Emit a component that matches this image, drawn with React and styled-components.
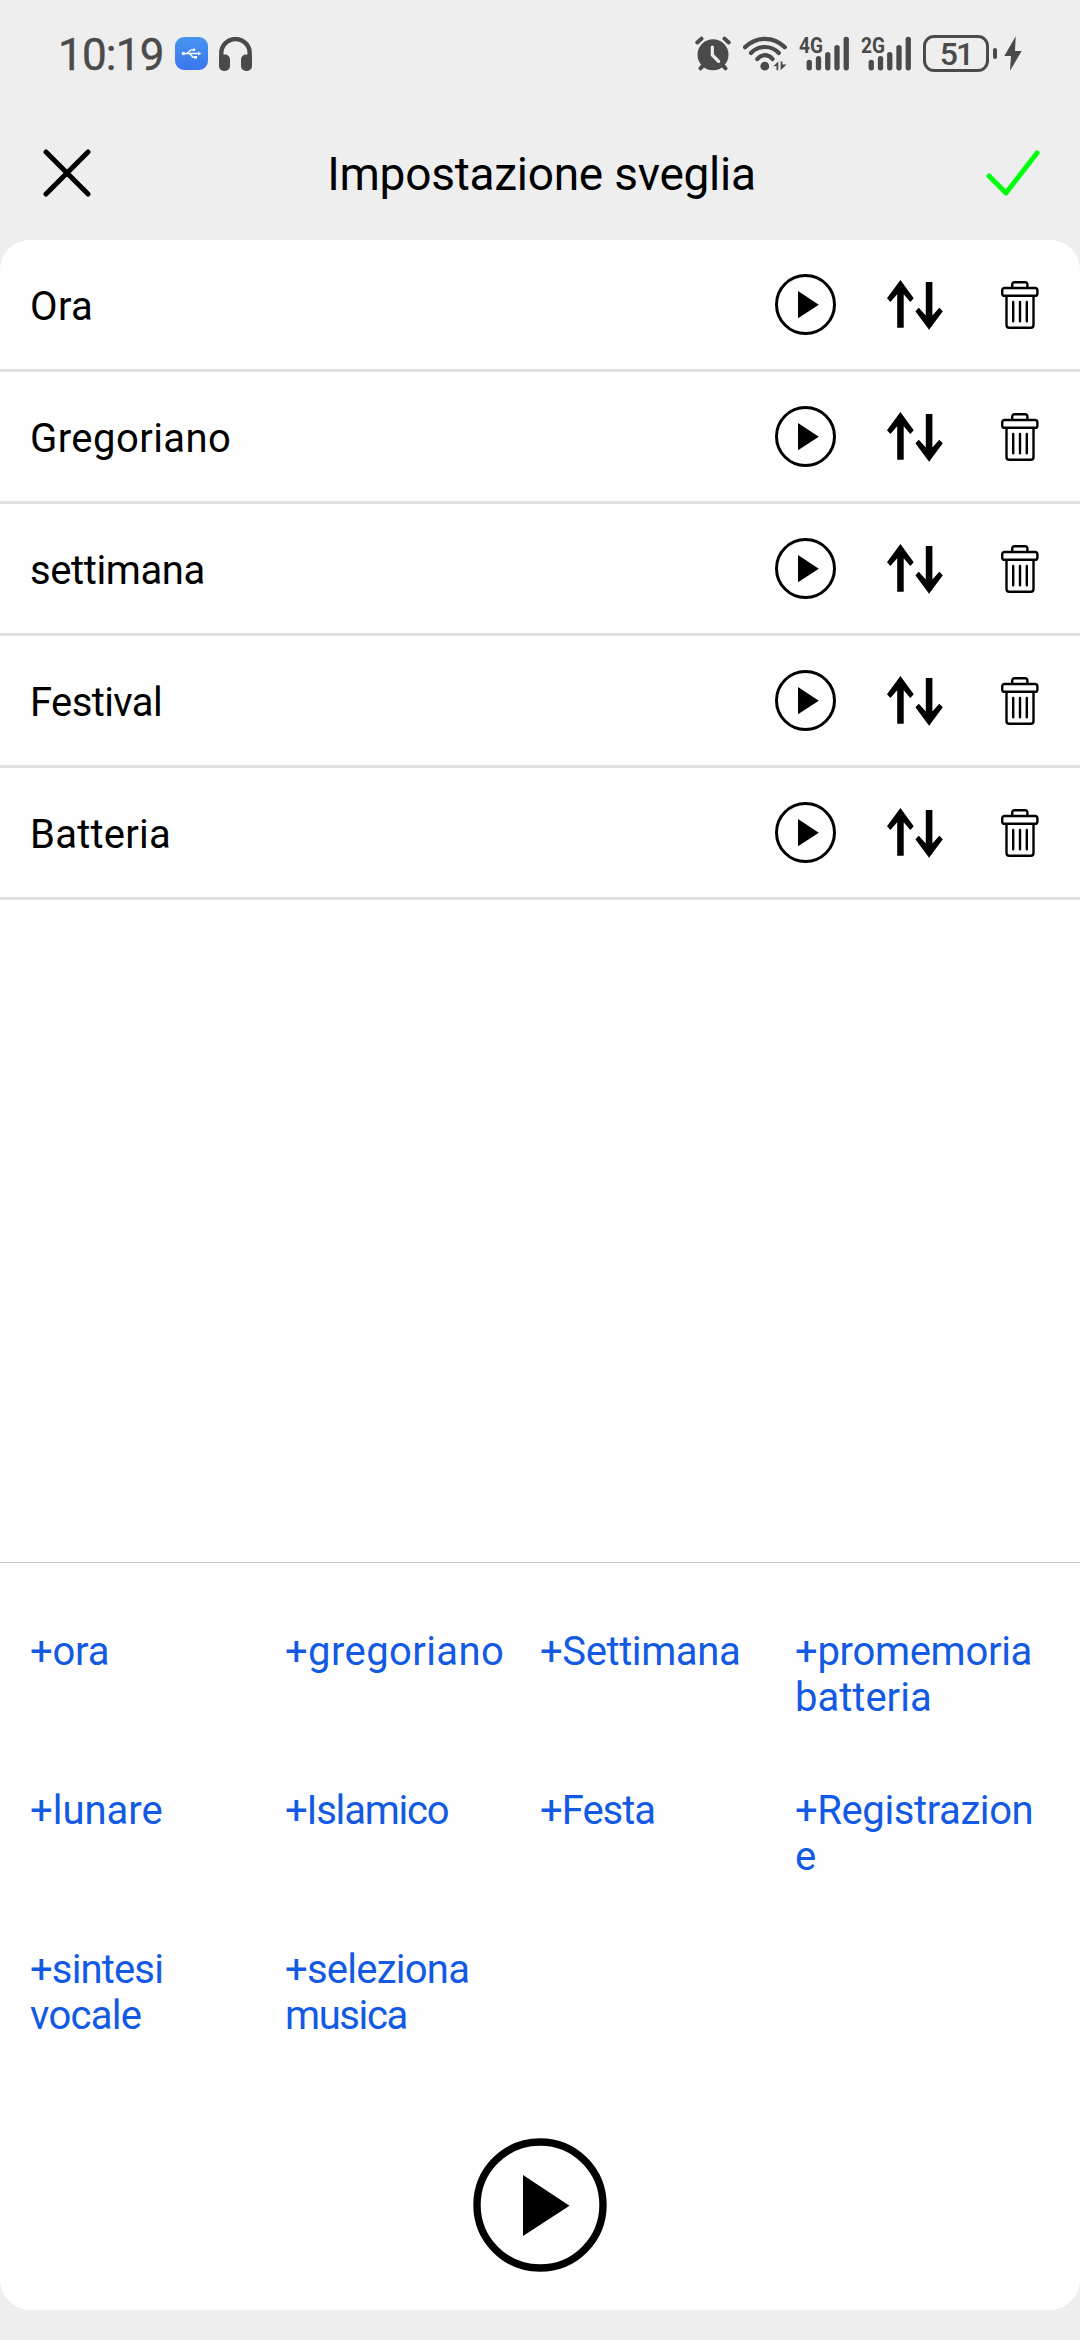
/** @format */

import React from 'react'
import styled, { createGlobalStyle } from 'styled-components'

const items = [
  { label: 'Ora', spacing: 0.4 },
  { label: 'Gregoriano', spacing: 0.45 },
  { label: 'settimana', spacing: -0.4 },
  { label: 'Festival', spacing: -0.6 },
  { label: 'Batteria', spacing: 0.25 },
]

// each line carries its own letter spacing
const actions = [
  [['+ora', -0.2]],
  [['+gregoriano', 0.4]],
  [['+Settimana', -0.4]],
  [['+promemoria', -0.3], ['batteria', 0]],
  [['+lunare', 0]],
  [['+Islamico', -1.2]],
  [['+Festa', -1]],
  [['+Registrazion', -0.4], ['e', 0]],
  [['+sintesi', -0.85], ['vocale', -0.7]],
  [['+seleziona', -0.75], ['musica', -1.4]],
]

const barTops = [23.7, 20, 16, 9, 0.7]

function UsbIcon() {
  return (
    <svg width='33' height='33' viewBox='0 0 33 33'>
      <g fill='none' stroke='white' strokeWidth='1.3'>
        <path d='M8 16.5H23M12 16.5L16 12.8H18.5M14.5 16.5L18 20.3H20' />
      </g>
      <circle cx='8.5' cy='16.5' r='1.8' fill='white' />
      <circle cx='19' cy='12.8' r='1.4' fill='white' />
      <rect x='19' y='19' width='3' height='2.6' fill='white' />
      <path d='M23 14.6L26.3 16.5L23 18.4Z' fill='white' />
    </svg>
  )
}

function HeadphonesIcon() {
  return (
    <svg width='33' height='34' viewBox='0 0 33 34'>
      <path d='M2.3 25V16.2A14.2 14.2 0 0 1 30.7 16.2V25' fill='none' stroke='#4a4a4a' strokeWidth='4.4' />
      <rect x='0' y='17.5' width='11' height='16.5' rx='5' fill='#4a4a4a' />
      <rect x='22' y='17.5' width='11' height='16.5' rx='5' fill='#4a4a4a' />
    </svg>
  )
}

function AlarmIcon() {
  return (
    <svg width='36' height='35' viewBox='0 0 36 35'>
      <g stroke='#4a4a4a' strokeWidth='4' strokeLinecap='round'>
        <path d='M2.3 6.5L6.5 2.6M33.7 6.5L29.5 2.6' />
        <path d='M5.5 32.3L9 28.5M30.5 32.3L27 28.5' />
      </g>
      <circle cx='18' cy='18.7' r='15.5' fill='#4a4a4a' />
      <path
        d='M17.3 11V19L23.6 25.3'
        fill='none'
        stroke='#eee'
        strokeWidth='3.2'
        strokeLinecap='round'
        strokeLinejoin='round'
      />
    </svg>
  )
}

function WifiIcon() {
  return (
    <svg width='44' height='35' viewBox='0 0 44 35'>
      <g fill='none' stroke='#4a4a4a' strokeWidth='4.2' strokeLinecap='round'>
        <path d='M2 11.3Q10.5 2.8 21.9 2.8T41.8 11.3' />
        <path d='M8 17Q13.7 11 21.9 11T35.8 17' />
        <path d='M14.3 23Q17.4 19.2 21.9 19.2T29.5 23' />
      </g>
      <circle cx='21.8' cy='30.2' r='4.4' fill='#4a4a4a' />
      <path d='M30.3 30.2L35.3 25.6V34.3H33.5V30.2ZM37.6 34.3V25.6H39.4V28.4H43.6Z' fill='#4a4a4a' />
    </svg>
  )
}

function Signal({ label }) {
  return (
    <svg width='50' height='45' viewBox='0 -5 50 45'>
      <NetLabel x='0' y='17' textLength='24' lengthAdjust='spacingAndGlyphs'>
        {label}
      </NetLabel>
      {barTops.map((top, i) => (
        <rect key={top} x={7.6 + i * 9.25} y={top} width='5.3' height={34.4 - top} rx='2.6' fill='#4a4a4a' />
      ))}
    </svg>
  )
}

function BoltIcon() {
  return (
    <svg width='18' height='35' viewBox='0 0 18 35'>
      <path d='M11.7 0.3L0.3 20H7L6 34.7L17.7 15H11Z' fill='#4a4a4a' />
    </svg>
  )
}

function CloseIcon() {
  return (
    <svg width='48' height='48' viewBox='0 0 48 48'>
      <path d='M3 3L45 45M45 3L3 45' stroke='black' strokeWidth='5' strokeLinecap='round' />
    </svg>
  )
}

function CheckIcon() {
  return (
    <svg width='54' height='48' viewBox='0 0 54 48'>
      <path
        d='M3 27L20 44L51 4'
        fill='none'
        stroke='#00ff0c'
        strokeWidth='5'
        strokeLinecap='round'
        strokeLinejoin='round'
      />
    </svg>
  )
}

function PlayIcon() {
  return (
    <svg width='61' height='61' viewBox='0 0 61 61'>
      <circle cx='30.5' cy='30.5' r='29' fill='none' stroke='black' strokeWidth='3' />
      <path d='M23 17V44.3L43.8 30.7Z' />
    </svg>
  )
}

function BigPlayIcon() {
  return (
    <svg width='134' height='134' viewBox='0 0 134 134'>
      <circle cx='67' cy='67' r='63' fill='none' stroke='black' strokeWidth='7.4' />
      <path d='M50 37V98L96.5 67.7Z' />
    </svg>
  )
}

function SortIcon() {
  return (
    <svg width='56' height='50' viewBox='0 0 56 50'>
      <path d='M13.4 0L26.7 18.3L23.3 22L16.7 14.3V47.7H10.2V14.3L3.4 22L0 18.3Z' />
      <path d='M38.8 2H45.4V35.6L52.3 27.7L55.8 31.3L42.1 49.8L28.4 31.3L31.8 27.7L38.8 35.6Z' />
    </svg>
  )
}

function TrashIcon() {
  return (
    <svg width='38' height='48' viewBox='0 0 38 48'>
      <g fill='none' stroke='black' strokeWidth='2.4'>
        <path d='M11.2 6.8V3.6Q11.2 1.2 13.6 1.2H24Q26.4 1.2 26.4 3.6V6.8' />
        <rect x='1.2' y='7' width='35.2' height='7.8' rx='2.4' />
        <path d='M5.5 15V44Q5.5 46.8 8.3 46.8H29.7Q32.5 46.8 32.5 44V15' />
        <path d='M12.2 21V40.2M19 21V40.2M25.8 21V40.2' strokeLinecap='round' />
      </g>
    </svg>
  )
}

function App() {
  return (
    <Screen>
      <GlobalStyle />
      <StatusBar>
        <StatusLeft>
          <Clock>10:19</Clock>
          <UsbBadge>
            <UsbIcon />
          </UsbBadge>
          <HeadphonesIcon />
        </StatusLeft>
        <StatusRight>
          <AlarmIcon />
          <WifiIcon />
          <Signal label='4G' />
          <Signal label='2G' />
          <Battery>
            <BatteryBody>51</BatteryBody>
            <BatteryTip />
          </Battery>
          <BoltIcon />
        </StatusRight>
      </StatusBar>
      <Header>
        <IconButton>
          <CloseIcon />
        </IconButton>
        <Title>Impostazione sveglia</Title>
        <IconButton>
          <CheckIcon />
        </IconButton>
      </Header>
      <Card>
        <List>
          {items.map((item) => (
            <Row key={item.label}>
              <RowLabel $spacing={item.spacing}>{item.label}</RowLabel>
              <RowTools>
                <IconButton>
                  <PlayIcon />
                </IconButton>
                <IconButton>
                  <SortIcon />
                </IconButton>
                <IconButton>
                  <TrashIcon />
                </IconButton>
              </RowTools>
            </Row>
          ))}
        </List>
        <Panel>
          <ActionGrid>
            {actions.map((lines) => (
              <Action key={lines[0][0]}>
                {lines.map(([text, spacing]) => (
                  <ActionLine key={text} $spacing={spacing}>
                    {text}
                  </ActionLine>
                ))}
              </Action>
            ))}
          </ActionGrid>
          <PlayAll>
            <BigPlayIcon />
          </PlayAll>
        </Panel>
      </Card>
    </Screen>
  )
}

export default App

const GlobalStyle = createGlobalStyle`
  * {
    box-sizing: border-box;
  }
  body {
    margin: 0;
    background-color: #eeeeee;
    font-family: Roboto, 'Noto Sans', sans-serif;
  }
  svg {
    display: block;
    flex-shrink: 0;
  }
`

const Screen = styled.div`
  width: 1080px;
  height: 2340px;
  display: flex;
  flex-direction: column;
  padding-bottom: 30px;
  background-color: #eeeeee;
`

const StatusBar = styled.div`
  height: 107px;
  display: flex;
  justify-content: space-between;
  align-items: center;
  padding: 0 58px 0 57px;
  color: #4a4a4a;
`

const StatusLeft = styled.div`
  display: flex;
  align-items: center;
  gap: 11px;
`

const StatusRight = styled.div`
  display: flex;
  align-items: center;
  gap: 12px;
`

const Clock = styled.span`
  width: 107px;
  padding-top: 2px;
  padding-left: 1px;
  font-size: 44px;
  line-height: 52px;
  letter-spacing: -0.8px;
  -webkit-text-stroke: 0.4px #4a4a4a;
`

const UsbBadge = styled.span`
  width: 33px;
  height: 33px;
  border-radius: 9px;
  background: linear-gradient(#4694f1, #3a76ec);
`

const NetLabel = styled.text`
  font-size: 22px;
  font-weight: 700;
  fill: #4a4a4a;
`

const Battery = styled.div`
  display: flex;
  align-items: center;
  gap: 4px;
  margin-right: -5px;
`

const BatteryBody = styled.div`
  width: 66px;
  height: 37px;
  border: 3px solid #4a4a4a;
  border-radius: 11px;
  font-size: 32px;
  font-weight: 500;
  line-height: 32px;
  text-align: center;
  letter-spacing: -2px;
`

const BatteryTip = styled.div`
  width: 4px;
  height: 11px;
  border-radius: 2px;
  background-color: #4a4a4a;
`

const Header = styled.div`
  height: 133px;
  display: grid;
  grid-template-columns: 54px 1fr 54px;
  align-items: center;
  padding: 0 40px 2px 43px;
`

const Title = styled.h1`
  margin: 0;
  padding-top: 2px;
  font-size: 46px;
  font-weight: 400;
  line-height: 54px;
  letter-spacing: -0.25px;
  text-align: center;
`

const IconButton = styled.button`
  display: flex;
  padding: 0;
  border: none;
  background-color: transparent;
  cursor: pointer;
`

const Card = styled.div`
  flex: 1;
  display: flex;
  flex-direction: column;
  border-radius: 30px;
  background-color: #fefefe;
  overflow: hidden;
`

const List = styled.div`
  flex: 1;
`

const Row = styled.div`
  height: 132px;
  display: flex;
  justify-content: space-between;
  align-items: center;
  padding: 0 41px 0 30px;
  border-bottom: 3px solid #e0e0e0;
`

const RowLabel = styled.span`
  padding-top: 5px;
  font-size: 40px;
  line-height: 46px;
  letter-spacing: ${(props) => props.$spacing}px;
`

const RowTools = styled.div`
  display: grid;
  grid-template-columns: 112px 114px 38px;
  align-items: center;
`

const Panel = styled.div`
  height: 748px;
  border-top: 1px solid #c8c8c8;
`

const ActionGrid = styled.div`
  display: grid;
  grid-template-columns: repeat(4, 255px);
  grid-auto-rows: 159px;
  padding: 66px 30px 0;
`

const Action = styled.div`
  display: flex;
  flex-direction: column;
  color: #1259e3;
`

const ActionLine = styled.span`
  font-size: 40px;
  line-height: 46px;
  letter-spacing: ${(props) => props.$spacing}px;
`

const PlayAll = styled.div`
  display: flex;
  justify-content: center;
  padding-top: 32px;
`
